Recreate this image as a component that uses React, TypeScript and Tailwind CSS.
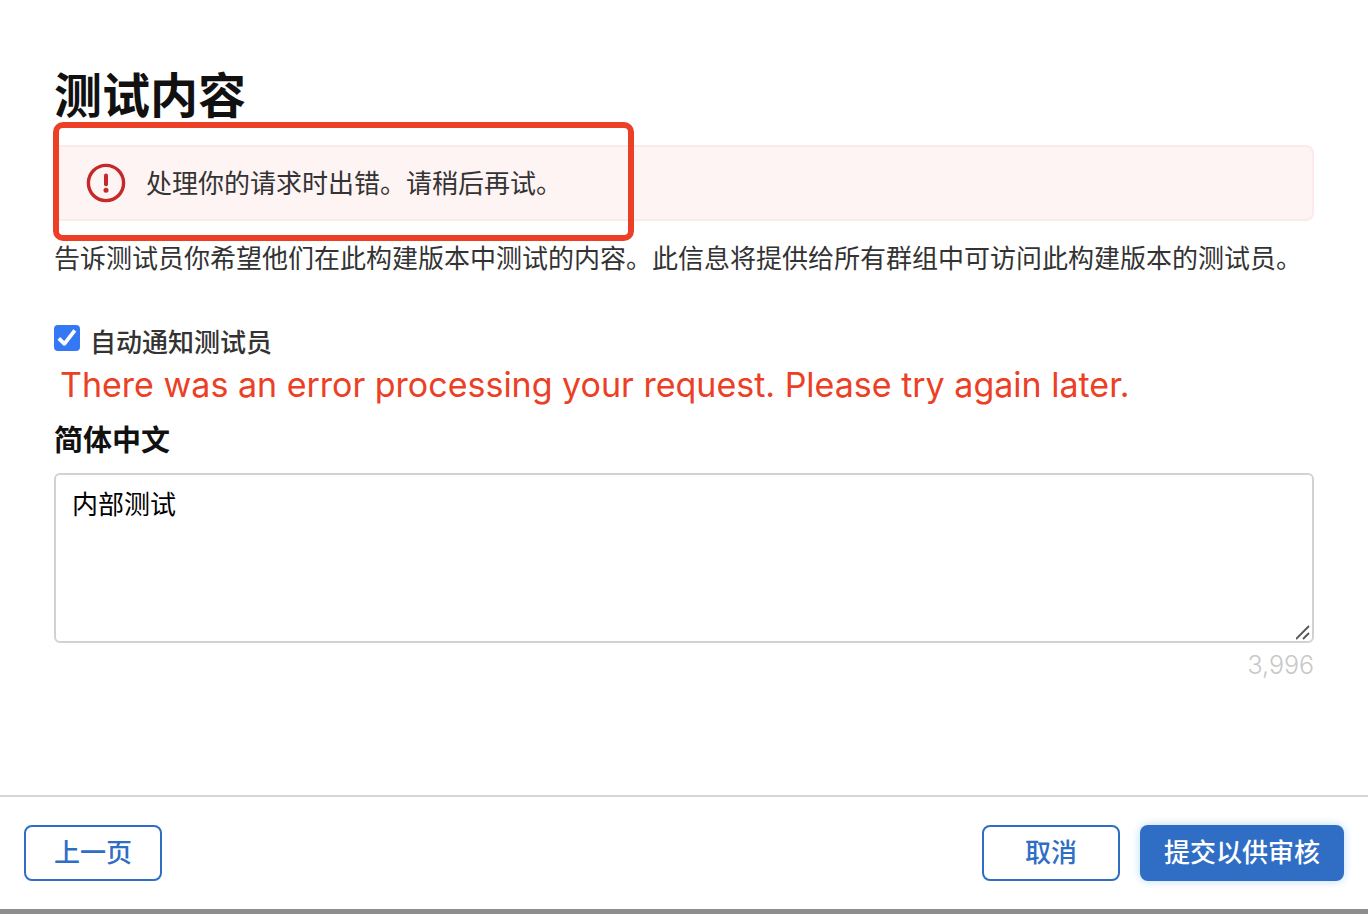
import React, { useState } from 'react';

const MAX_LENGTH = 4000;

export default function App() {
  const [notify, setNotify] = useState(true);
  const [notes, setNotes] = useState('内部测试');

  return (
    <div
      lang="zh-CN"
      className="min-h-screen flex flex-col bg-white border-b-[5px] border-[#8e8e8e] text-[26px] leading-9 text-[#333333] font-['Inter','Noto_Sans_CJK_SC',sans-serif]"
    >
      <main className="flex-grow flex flex-col px-[54px] pt-16">
        <h1 className="text-5xl leading-[64px] font-bold text-[#111111]">测试内容</h1>

        <div className="relative mt-[17px]">
          <div
            role="alert"
            className="flex items-center gap-5 h-[76px] px-[30px] bg-[#fdf4f3] border-2 border-[#fceaea] rounded-lg"
          >
            <svg className="w-10 h-10 shrink-0" viewBox="0 0 40 40" fill="none" stroke="#c52a2a" aria-hidden="true">
              <circle cx="20" cy="20" r="17.6" strokeWidth="3.4" />
              <path d="M20 12.4v8.8" strokeWidth="4" strokeLinecap="round" />
              <circle cx="20" cy="27.2" r="2.5" fill="#c52a2a" stroke="none" />
            </svg>
            <p className="pt-0.5">处理你的请求时出错。请稍后再试。</p>
          </div>
          <div className="absolute -top-[23px] -left-px w-[581px] h-[119px] border-[6px] border-[#ec4026] rounded-[10px] pointer-events-none" />
        </div>

        <p className="mt-5">
          告诉测试员你希望他们在此构建版本中测试的内容。此信息将提供给所有群组中可访问此构建版本的测试员。
        </p>

        <div className="mt-12 flex items-start gap-2.5">
          <span className="relative w-[26px] h-[26px] shrink-0">
            <input
              id="notify"
              type="checkbox"
              checked={notify}
              onChange={(e) => setNotify(e.target.checked)}
              className="block w-[26px] h-[26px] appearance-none rounded border-2 border-[#c6c6c6] checked:border-[#3478f6] checked:bg-[#3478f6]"
            />
            {notify && (
              <svg className="absolute inset-0 pointer-events-none" viewBox="0 0 26 26" fill="none" stroke="white" strokeWidth="3.8">
                <path d="M4.8 13.4l5.6 5.4L20.8 5.4" strokeLinejoin="round" />
              </svg>
            )}
          </span>
          <label htmlFor="notify" className="font-medium">自动通知测试员</label>
        </div>

        <p className="px-1.5 mt-1 text-[34px] leading-10 text-[#ec4026]">
          There was an error processing your request. Please try again later.
        </p>

        <label htmlFor="notes" className="mt-4 text-[29px] leading-10 font-bold text-[#111111]">简体中文</label>
        <div className="relative mt-3">
          <textarea
            id="notes"
            value={notes}
            maxLength={MAX_LENGTH}
            onChange={(e) => setNotes(e.target.value)}
            className="block w-full h-[170px] px-4 py-3 border-2 border-[#d2d2d2] rounded-md text-black resize-y outline-none [&::-webkit-resizer]:bg-transparent"
          />
          <svg
            className="absolute right-0.5 bottom-0.5 w-4 h-4 pointer-events-none"
            viewBox="0 0 16 16"
            fill="none"
            stroke="#555555"
            strokeWidth="1.8"
          >
            <path d="M0 14L13 1M7 14l6-6" />
          </svg>
        </div>
        <p className="mt-1 text-right text-[25px] font-light text-[#c8c8c8]">
          {(MAX_LENGTH - notes.length).toLocaleString('en-US')}
        </p>
      </main>

      <footer className="flex items-center justify-between px-6 py-7 border-t-2 border-[#d6d6d6]">
        <button className="h-14 w-[138px] border-2 border-[#2f6ec4] rounded-lg font-medium text-[#2f6ec4]">上一页</button>
        <div className="flex gap-5">
          <button className="h-14 w-[138px] border-2 border-[#2f6ec4] rounded-lg font-medium text-[#2f6ec4]">取消</button>
          <button className="h-14 px-6 rounded-lg font-medium text-white bg-[#2f6ec4] shadow-[0_0_10px_#b9dcf8]">
            提交以供审核
          </button>
        </div>
      </footer>
    </div>
  );
}
